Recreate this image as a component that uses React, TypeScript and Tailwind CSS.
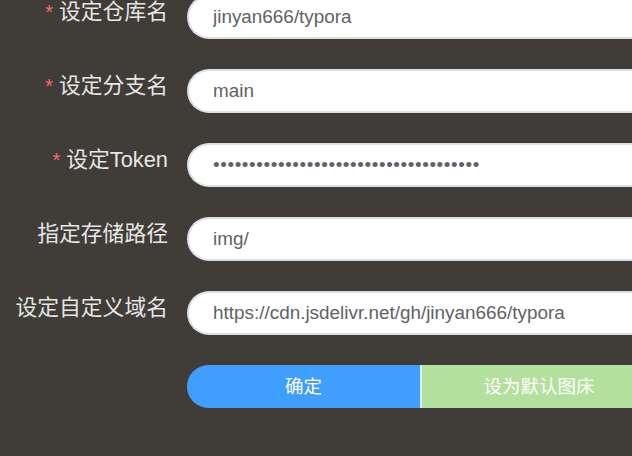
import React from "react";

interface Field {
	label: string;
	required: boolean;
	value: string;
	password?: boolean;
}

const fields: Field[] = [
	{ label: "设定仓库名", required: true, value: "jinyan666/typora" },
	{ label: "设定分支名", required: true, value: "main" },
	{ label: "设定Token", required: true, value: "ghp_x8Qe2mT4vLr9NcY1sPzK7wHb3jDf6aGu5", password: true },
	{ label: "指定存储路径", required: false, value: "img/" },
	{ label: "设定自定义域名", required: false, value: "https://cdn.jsdelivr.net/gh/jinyan666/typora" },
];

const FormRow = ({ label, required, value, password }: Field) => {
	return (
		<div className="flex items-start h-[44px] mb-[30px]">
			<label className="w-[168px] shrink-0 text-right text-[21.8px] leading-[34px] text-[#e6e6e6] whitespace-nowrap">
				{required && <span className="text-[#f56c6c] mr-[6px] text-[20px]">*</span>}
				{label}
			</label>
			<input
				type={password ? "password" : "text"}
				defaultValue={value}
				className={
					password
						? "ml-[19px] w-[520px] shrink-0 h-[44px] rounded-l-full border-2 border-r-0 border-[#dcdfe6] bg-white pl-[24px] text-[18.9px] tracking-[0.6px] text-[#606266] outline-none"
						: "ml-[19px] w-[520px] shrink-0 h-[44px] rounded-l-full border-2 border-r-0 border-[#dcdfe6] bg-white pl-[24px] text-[18.9px] text-[#606266] outline-none"
				}
			/>
		</div>
	);
};

const App = () => {
	return (
		<div
			className="w-full h-screen overflow-hidden bg-[#403c37]"
			style={{ fontFamily: '"Liberation Sans", "Noto Sans CJK SC", sans-serif' }}>
			<div className="-mt-[5px]">
				{fields.map((f) => (
					<FormRow key={f.label} {...f} />
				))}
				<div className="flex h-[43px]">
					<div className="w-[168px] shrink-0" />
					<button
						type="button"
						className="ml-[19px] w-[233px] shrink-0 h-[43px] rounded-l-full bg-[#409eff] text-white text-[18.5px]">
						确定
					</button>
					<button
						type="button"
						className="w-[236px] shrink-0 h-[43px] border-l-2 border-[#d9ecff] bg-[#b3e19d] text-white text-[18.5px]">
						设为默认图床
					</button>
				</div>
			</div>
		</div>
	);
};

export default App;
